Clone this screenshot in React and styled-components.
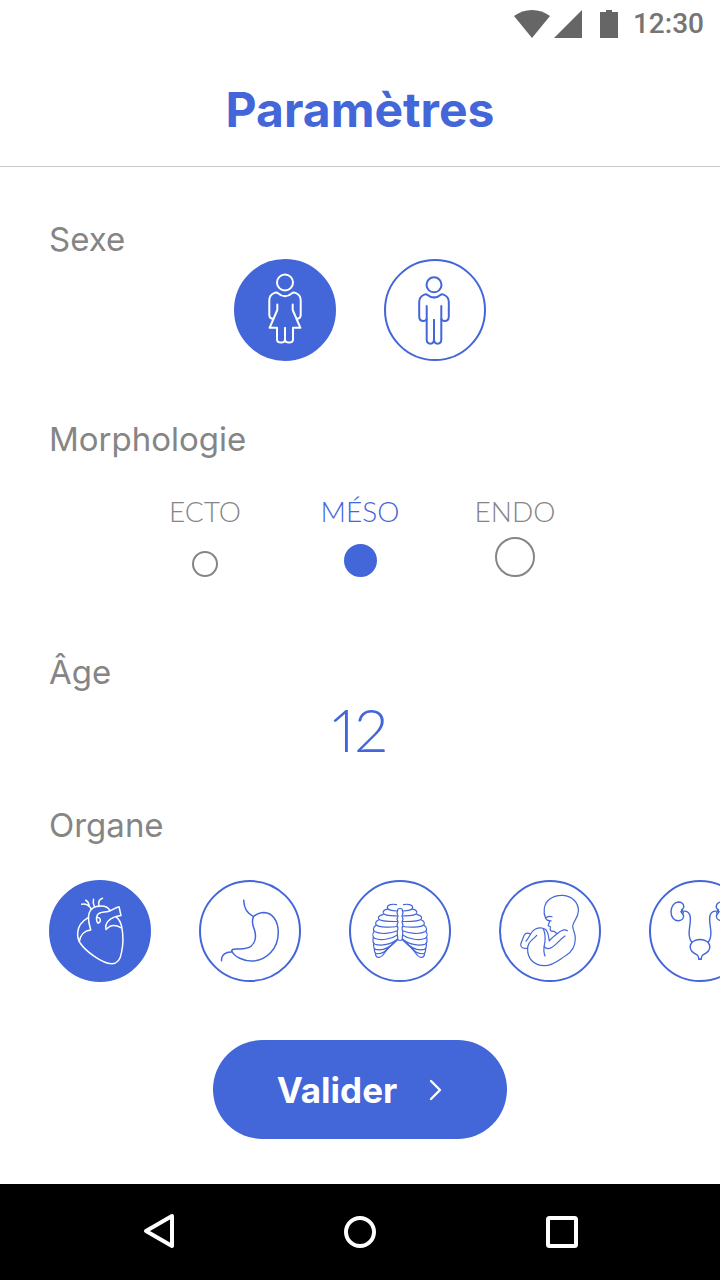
import React, { useState } from "react";
import styled, { createGlobalStyle, css } from "styled-components";

const blue = "#4366d9";
const grey = "#858585";

const GlobalStyle = createGlobalStyle`
  *, *::before, *::after { box-sizing: border-box; }
  body { margin: 0; background: #fff; }
  button, input { font: inherit; }
`;

const Page = styled.div`
  display: flex;
  flex-direction: column;
  min-height: 100vh;
  background: #fff;
  color: ${grey};
  font-family: Inter, "Liberation Sans", sans-serif;
`;

const StatusBar = styled.div`
  display: flex;
  justify-content: flex-end;
  align-items: center;
  height: 48px;
  padding-right: 16px;
  color: #757575;
  font: 500 28px/32px Roboto, sans-serif;
`;

const StatusIcons = styled.svg`
  width: 104px;
  height: 28px;
  margin-right: 15px;
  fill: #666;
`;

const Header = styled.header`
  padding: 32px 16px 26px;
  border-bottom: 1px solid #c8c8c8;
  text-align: center;
`;

const Title = styled.h1`
  margin: 0;
  color: ${blue};
  font-size: 48px;
  line-height: 60px;
  font-weight: 700;
`;

const Form = styled.form`
  flex: 1;
  display: flex;
  flex-direction: column;
  padding: 52px 0 44px;
`;

const Section = styled.section`
  display: flex;
  flex-direction: column;
  gap: ${(p) => p.$gap || 0}px;
  padding-bottom: ${(p) => p.$after}px;
`;

const labelText = css`
  margin: 0;
  padding: 0 49px;
  font-size: 33px;
  line-height: 40px;
  font-weight: 400;
`;

const SectionTitle = styled.h2`
  ${labelText}
`;

const FieldLabel = styled.label`
  ${labelText}
`;

const SexRow = styled.div`
  display: flex;
  justify-content: center;
  gap: 48px;
`;

const OrganRow = styled.div`
  display: flex;
  gap: 48px;
  padding: 0 49px;
  overflow-x: auto;
  scrollbar-width: none;
`;

const IconChoice = styled.label`
  display: grid;
  flex: none;
  width: 102px;
  height: 102px;
  color: ${blue};
  cursor: pointer;

  > * { grid-area: 1 / 1; }
  &:has(input:checked) { color: #fff; }
`;

const Disc = styled.input`
  appearance: none;
  width: 100%;
  height: 100%;
  margin: 0;
  border: 2px solid ${blue};
  border-radius: 50%;
  cursor: pointer;

  &:checked { background: ${blue}; }
  &:focus-visible { outline: 2px solid ${blue}; outline-offset: 3px; }
`;

const Drawing = styled.svg`
  width: 102px;
  height: 102px;
  fill: none;
  stroke: currentColor;
  stroke-width: ${(p) => p.$weight};
  stroke-linecap: round;
  stroke-linejoin: round;
  pointer-events: none;
`;

const BodyTypes = styled.div`
  display: grid;
  grid-template-columns: repeat(3, 155px);
  justify-content: center;
`;

const BodyType = styled.label`
  display: flex;
  flex-direction: column;
  align-items: center;
  gap: 10px;
  font: 300 28px/32px Lato, sans-serif;
  cursor: pointer;

  &:has(input:checked) { color: ${blue}; }
`;

const DotSlot = styled.span`
  display: flex;
  align-items: flex-end;
  height: 40px;
`;

const Dot = styled(Disc)`
  width: ${(p) => p.$size}px;
  height: ${(p) => p.$size}px;
  border-color: ${grey};

  &:checked { border-color: ${blue}; }
`;

const AgeInput = styled.input`
  align-self: center;
  width: 160px;
  height: 64px;
  padding: 0;
  border: 0;
  outline: 0;
  background: none;
  color: ${blue};
  font: 300 60px/64px Lato, sans-serif;
  font-feature-settings: "pnum";
  text-align: center;
`;

const Submit = styled.button`
  display: flex;
  align-items: center;
  align-self: center;
  gap: 30px;
  height: 99px;
  padding: 0 64px;
  border: 0;
  border-radius: 50px;
  background: ${blue};
  color: #fff;
  font-size: 35px;
  font-weight: 700;
  cursor: pointer;
`;

const Chevron = styled.svg`
  width: 16px;
  height: 24px;
  fill: none;
  stroke: currentColor;
  stroke-width: 2.4;
  stroke-linecap: round;
  stroke-linejoin: round;
`;

const NavBar = styled.nav`
  display: flex;
  justify-content: center;
  align-items: center;
  gap: 106px;
  height: 96px;
  background: #000;
`;

const NavButton = styled.button`
  display: grid;
  place-items: center;
  width: 96px;
  height: 96px;
  padding: 0;
  border: 0;
  background: none;
  color: #fff;
  cursor: pointer;

  svg {
    width: 40px;
    height: 40px;
    fill: none;
    stroke: currentColor;
    stroke-width: 4;
    stroke-linejoin: round;
  }
`;

const Mirrored = ({ children }) => (
  <>
    <g>{children}</g>
    <g transform="translate(102 0) scale(-1 1)">{children}</g>
  </>
);

const Woman = () => (
  <Drawing viewBox="0 0 102 102" $weight={2} aria-hidden="true">
    <circle cx="51" cy="23.5" r="8" />
    <Mirrored>
      <path d="M51 37.2C48 37.2 46 36 44 34.2C42.8 33.2 41.5 33.4 40.5 33.9C37 35.4 35.3 37.8 35.3 41V56C35.3 58.5 36.6 59.5 38.6 59.8" />
      <path d="M43.3 45.5V51L35.6 68.8H43V80.4C43 84.4 51 84.4 51 80.4V69" />
    </Mirrored>
  </Drawing>
);

const Man = () => (
  <Drawing viewBox="0 0 102 102" $weight={2} aria-hidden="true">
    <g transform="translate(-1 0)">
      <circle cx="51" cy="25.8" r="7.5" />
      <Mirrored>
        <path d="M51 38.6C48.5 38.6 46.4 37.6 44.6 36C43.5 35 42.4 35.1 41.4 35.6C38 37 36.2 39.5 36.2 43V57.5C36.2 60.8 38.4 62 40.5 62C42.2 62 43.2 61.2 43.6 60" />
        <path d="M43.7 47V80.5C43.7 86 51 86 51 80.5V61" />
      </Mirrored>
    </g>
  </Drawing>
);

const Heart = () => (
  <Drawing viewBox="0 0 102 102" $weight={1.5} aria-hidden="true">
    <path d="M39.5 37.3C34 40.5 29 46 28.7 52.5C28.4 57.5 29.5 61 31.5 63.5C36.5 71 53 83.5 62.7 83.7C68.5 83.8 71.5 79 72.5 72.5C74 66 74.2 54.5 72.7 46.7C71.8 42.5 69.8 38.9 67.2 36.8" />
    <path d="M30.3 61.3C31.2 55.8 35 50.7 41.7 50C40.6 44.8 38.3 39.5 40 33.6C41.3 29.5 44 27.3 47.5 26.6C53 25.4 58.2 26 60.6 30" />
    <path d="M70 26.7L72 35.5C66.5 36.3 62.3 38 59.5 40.8C57 43.3 56.2 46 57 49.5C60.5 45.4 66 44.2 71.8 47.6M70 26.7C65.5 27.7 62.8 30.6 59.2 31.4C55 32.5 50.7 31.7 48.5 34.8C47 37.2 47.2 41.5 49 43.2C51 42.3 52 40.6 51 38.8C50.4 37.7 49.8 37.3 48.6 37.5" />
    <path d="M32.7 24.2C37.7 23.6 40.5 25.8 42.5 29.4M36.7 20.3C39 21.4 39.8 23.2 40.2 25.8M44.5 19.3C43.8 22 44.3 24.2 45.5 26.8M53.5 18.3C50.4 19.4 49 22 50 25.8" />
  </Drawing>
);

const Stomach = () => (
  <Drawing viewBox="0 0 102 102" $weight={1.5} aria-hidden="true">
    <path d="M44.7 20.3C45 28 49 34 54.5 36.6C57.5 33.8 61 32.4 65 32.4C73.5 32.6 79.3 41 79.3 52.5C79.3 68 68 81 52.7 81C44.5 81 35.5 76.7 33 71.5C32 69.6 34.5 68.9 37.5 68.9C43 68.9 48.5 69.4 52 66.3C56.5 62.3 57.3 56 55.5 50C54.2 45.8 51.8 42.5 54.5 36.6" />
    <path d="M33 72C27 71.6 22.3 74.5 22.5 80.7" />
  </Drawing>
);

const Ribs = () => (
  <Drawing viewBox="0 0 102 102" $weight={1.2} aria-hidden="true">
    <path d="M48.7 30C48.7 28 53.3 28 53.3 30L54 33L53 36L54 39L53 42L54 45L53 48L53.8 52L53.2 59C53 61 49 61 48.8 59L48.2 52L49 48L48 45L49 42L48 39L49 36L48 33Z" />
    <Mirrored>
      <path d="M47.5 24.6C43.5 23.7 38.6 24.5 38.3 27.2C38 30.2 43.5 30.7 48.2 31" />
      <path d="M38.3 29.3C35.5 29.3 33.8 31.2 34.2 33C35 36 42.5 35.8 48.4 36" />
      <path d="M34.2 34.6C31 34.8 28.8 36.8 29.5 38.8C31.5 41.8 41.5 41.5 48.4 41.5" />
      <path d="M29.8 40C27.2 40.6 25.8 43.3 27.3 45C30.5 47.7 41.5 47.5 48.4 46.5" />
      <path d="M27 45.4C24.2 46.8 23.7 50.2 25.6 51.6C31 54.8 42 53.6 48.4 50.8" />
      <path d="M25 51.5C23.2 54 23.7 56.8 25.5 58.2C31.5 60.8 42 59.5 48.5 55" />
      <path d="M24.5 57C23.5 60 24 63 26 64.2C32 66.2 42.5 64.5 48.5 59" />
      <path d="M24.7 63.2C24.3 66 25 68.6 26.5 69.4C32 70.6 39 69 44.5 63" />
      <path d="M25.3 68.7C25.3 71 26.1 73.2 27.5 73.7C31.5 74.1 36 72.2 39.5 68" />
      <path d="M26.4 73.2C26.2 76 28 77.8 30.2 77.4C34 76.6 35.2 73 38 69.7C41.2 65.8 45.5 63.5 48.7 59.7" />
    </Mirrored>
  </Drawing>
);

const Fetus = () => (
  <Drawing viewBox="0 0 102 102" $weight={1.2} aria-hidden="true">
    <path d="M46.7 38.5C43.8 32 44.7 24 50.2 19.5C54.5 16 59.5 15.2 64 15.4C73 16 79.7 22.5 79.4 31C79.2 38.5 73.8 41.5 73.7 46.2C73.7 50.2 76.3 52.5 76.3 58.5C76.3 66 72.5 72 67 75.5C60.5 79.2 55 85.6 45.5 85.7C34.5 85.8 28.5 78 28.6 69C28.7 61.5 33.4 60.5 37.7 55.3" />
    <path d="M46.7 38.5C48 41 50.4 40 50.5 41.4C50.4 43.5 48.8 44.6 49.2 45.7C49.8 46.6 51.8 46 51.6 47.4C51.3 48.2 50.8 48.3 51.3 49C50.7 50.3 52.4 51.6 54 51.2C55.5 51 56.3 52.6 57.7 53.2M47.3 37.5C49.5 36.2 51.2 36.2 53 36.8M48.3 40.3L52 40.8" />
    <path d="M68.5 50.7C64.5 48 61 51.3 58.5 53.5C55.5 56 52 58 50.3 61C49.2 56.3 49.8 52 46.3 49.3C43 47.3 39.2 47.7 36 49.3C31.5 51.6 31.5 55.8 27 61.2M66 56C60.5 59.5 57 65.8 51.3 68.1C48.8 69 46.5 68.3 45.2 66.6" />
    <path d="M44.3 48.8C46.5 54 46.4 58.5 45.8 62.5C45.2 66.5 43.7 70.5 46 76" />
    <path d="M31.4 54C29 52.7 26.6 53 25.2 55L21.7 64.2C21.2 67.7 24 68.7 28.6 68.4" />
  </Drawing>
);

const Kidneys = () => (
  <Drawing viewBox="0 0 102 102" $weight={1.4} aria-hidden="true">
    <Mirrored>
      <path d="M32.5 31C32.8 29 35 29.2 34.8 26.3C34.5 23.7 32 22 29.3 22C25 22.2 22 26.7 22 31.8C22 37 25 40.7 29.2 40.7C32.5 40.7 34.6 38.6 34.6 36C34.5 33.5 32.3 33.8 32.2 31.8" />
      <path d="M32 31.6C36.5 30.4 39.8 31.5 41 35.5C42.5 43 39.2 49.5 40.3 56C40.7 58.6 41.5 60.7 42.7 62.2M32.5 29.5L34.5 33" />
      <path d="M51 59.5C45.5 59.5 41.3 62.4 41.2 66.7C41 71.5 45.3 73.5 48.3 75C49.7 76 49.5 77.5 49.8 79.3H51" />
    </Mirrored>
  </Drawing>
);

const sexes = [
  { id: "femme", name: "Femme", Icon: Woman },
  { id: "homme", name: "Homme", Icon: Man },
];

const bodyTypes = [
  { id: "ecto", name: "ECTO", size: 26 },
  { id: "meso", name: "MÉSO", size: 33 },
  { id: "endo", name: "ENDO", size: 40 },
];

const organs = [
  { id: "coeur", name: "Cœur", Icon: Heart },
  { id: "estomac", name: "Estomac", Icon: Stomach },
  { id: "poumons", name: "Cage thoracique", Icon: Ribs },
  { id: "foetus", name: "Fœtus", Icon: Fetus },
  { id: "reins", name: "Reins", Icon: Kidneys },
];

function IconChoices({ group, items, value, onChange }) {
  return items.map(({ id, name, Icon }) => (
    <IconChoice key={id}>
      <Disc
        type="radio"
        name={group}
        aria-label={name}
        checked={value === id}
        onChange={() => onChange(id)}
      />
      <Icon />
    </IconChoice>
  ));
}

export default function App() {
  const [sex, setSex] = useState("femme");
  const [body, setBody] = useState("meso");
  const [age, setAge] = useState("12");
  const [organ, setOrgan] = useState("coeur");

  return (
    <Page>
      <GlobalStyle />
      <StatusBar>
        <StatusIcons viewBox="0 0 104 28" aria-hidden="true">
          <path d="M18 28L0 6Q8 0 18 0T36 6Z" />
          <path d="M68 0V28H40Z" />
          <path d="M86 2H92V0H98V2H104V28H86Z" />
        </StatusIcons>
        <time>12:30</time>
      </StatusBar>
      <Header>
        <Title>Paramètres</Title>
      </Header>
      <Form onSubmit={(e) => e.preventDefault()}>
        <Section $after={58} role="radiogroup" aria-labelledby="sexe">
          <SectionTitle id="sexe">Sexe</SectionTitle>
          <SexRow>
            <IconChoices group="sexe" items={sexes} value={sex} onChange={setSex} />
          </SexRow>
        </Section>
        <Section $gap={36} $after={75} role="radiogroup" aria-labelledby="morphologie">
          <SectionTitle id="morphologie">Morphologie</SectionTitle>
          <BodyTypes>
            {bodyTypes.map(({ id, name, size }) => (
              <BodyType key={id}>
                {name}
                <DotSlot>
                  <Dot
                    type="radio"
                    name="morphologie"
                    $size={size}
                    checked={body === id}
                    onChange={() => setBody(id)}
                  />
                </DotSlot>
              </BodyType>
            ))}
          </BodyTypes>
        </Section>
        <Section $gap={5} $after={44}>
          <FieldLabel htmlFor="age">Âge</FieldLabel>
          <AgeInput
            id="age"
            inputMode="numeric"
            value={age}
            onChange={(e) => setAge(e.target.value)}
          />
        </Section>
        <Section $gap={35} $after={58} role="radiogroup" aria-labelledby="organe">
          <SectionTitle id="organe">Organe</SectionTitle>
          <OrganRow>
            <IconChoices group="organe" items={organs} value={organ} onChange={setOrgan} />
          </OrganRow>
        </Section>
        <Submit type="submit">
          Valider
          <Chevron viewBox="0 0 16 24" aria-hidden="true">
            <path d="M4 3L13 12L4 21" />
          </Chevron>
        </Submit>
      </Form>
      <NavBar aria-label="Navigation système">
        <NavButton type="button" aria-label="Retour">
          <svg viewBox="0 0 40 40" aria-hidden="true">
            <path d="M8 19L34 4V34Z" />
          </svg>
        </NavButton>
        <NavButton type="button" aria-label="Accueil">
          <svg viewBox="0 0 40 40" aria-hidden="true">
            <circle cx="20" cy="20" r="14" />
          </svg>
        </NavButton>
        <NavButton type="button" aria-label="Applications récentes">
          <svg viewBox="0 0 40 40" aria-hidden="true">
            <rect x="6" y="6" width="28" height="28" rx="1.5" />
          </svg>
        </NavButton>
      </NavBar>
    </Page>
  );
}
